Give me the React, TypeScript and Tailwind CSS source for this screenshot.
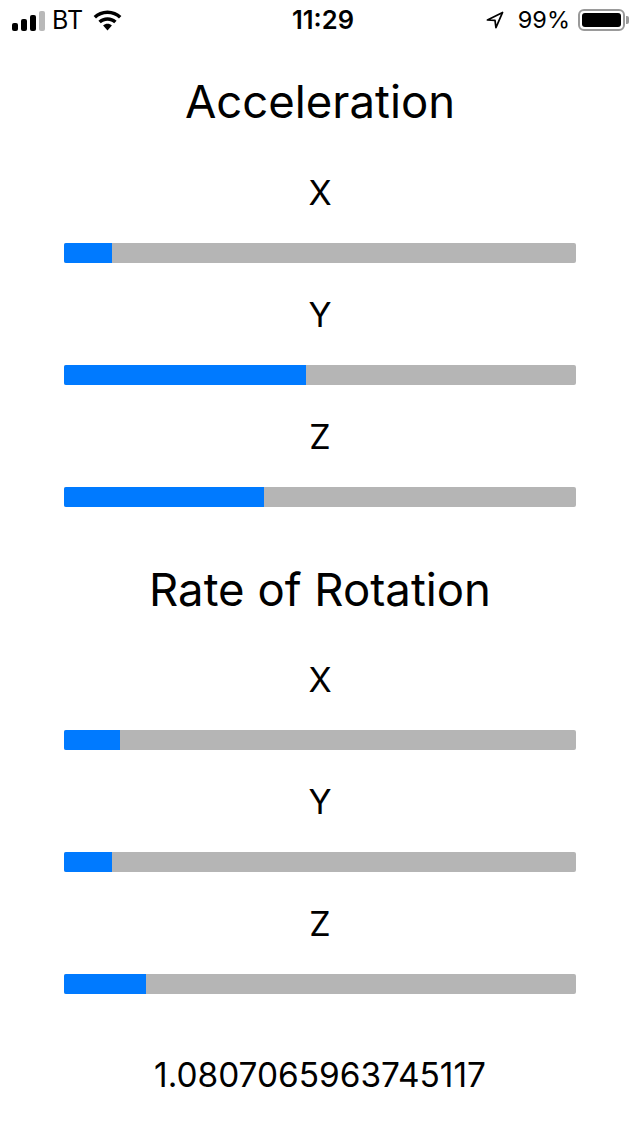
const font = "font-['Inter','Liberation_Sans',sans-serif]"

const acceleration = [
  { label: "X", value: 48 },
  { label: "Y", value: 242 },
  { label: "Z", value: 200 },
]

const rotation = [
  { label: "X", value: 56 },
  { label: "Y", value: 48 },
  { label: "Z", value: 82 },
]

function StatusBar() {
  return (
    <div className="flex h-10 items-center justify-between pl-3 pr-[11px] text-black">
      <div className="flex w-[200px] items-center">
        <div className="flex items-end gap-[3px] pt-[1px]">
          <div className="h-[8px] w-[6px] rounded-[2px] bg-black" />
          <div className="h-[12px] w-[6px] rounded-[2px] bg-black" />
          <div className="h-[16px] w-[6px] rounded-[2px] bg-black" />
          <div className="h-[20px] w-[6px] rounded-[2px] bg-[#b9b9b9]" />
        </div>
        <span className="ml-[7px] text-[25px] leading-none">BT</span>
        <svg className="ml-[10px]" width="29" height="21" viewBox="0 0 29 21">
          <path d="M14.5 0.5C9 0.5 4.1 2.6 0.6 5.9L3 8.5C6 5.7 10 4 14.5 4S23 5.7 26 8.5L28.4 5.9C24.9 2.6 20 0.5 14.5 0.5Z" fill="black" />
          <path d="M14.5 7.2C11 7.2 7.9 8.5 5.4 10.8L7.8 13.3C9.6 11.7 11.9 10.7 14.5 10.7S19.4 11.7 21.2 13.3L23.6 10.8C21.1 8.5 18 7.2 14.5 7.2Z" fill="black" />
          <path d="M14.5 13.8C12.8 13.8 11.3 14.4 10.1 15.5L14.5 20.4L18.9 15.5C17.7 14.4 16.2 13.8 14.5 13.8Z" fill="black" />
        </svg>
      </div>
      <span className="ml-[5px] text-[25.5px] leading-none font-semibold">11:29</span>
      <div className="flex w-[200px] items-center justify-end">
        <svg width="18" height="18" viewBox="0 0 19 19">
          <path d="M17.5 1.5L1.5 9.5L9.5 10L10.5 17.5Z" fill="none" stroke="black" strokeWidth="1.8" strokeLinejoin="round" />
        </svg>
        <span className="ml-[14px] text-[23.5px] leading-none">99%</span>
        <div className="ml-[8px] flex h-[22px] w-[47px] items-center rounded-[6px] border-2 border-[#9a9a9a] p-[2px]">
          <div className="h-full w-full rounded-[3px] bg-black" />
        </div>
        <div className="ml-[1px] h-[8px] w-[3px] rounded-r-[2px] bg-[#9a9a9a]" />
      </div>
    </div>
  )
}

function Meter({ label, value }: { label: string; value: number }) {
  return (
    <div className="flex h-[122px] flex-col items-center">
      <div className="h-[102px] pt-[31px] text-[34px] leading-[41px]">{label}</div>
      <div className="h-5 w-full overflow-hidden rounded-[2px] bg-[#b5b5b5]">
        <div className="h-full bg-[#007aff]" style={{ width: value }} />
      </div>
    </div>
  )
}

export default function App() {
  return (
    <div className={`${font} h-[1136px] w-[640px] overflow-hidden bg-white text-black`}>
      <StatusBar />
      <div className="px-16">
        <h1 className="pt-[33px] text-center text-[45.5px] leading-[58px] font-normal">Acceleration</h1>
        <div className="mt-[10px]">
          {acceleration.map((m) => (
            <Meter key={"a" + m.label} {...m} />
          ))}
        </div>
        <h1 className="mt-[54px] text-center text-[45.5px] leading-[58px] font-normal">Rate of Rotation</h1>
        <div className="mt-[9px]">
          {rotation.map((m) => (
            <Meter key={"r" + m.label} {...m} />
          ))}
        </div>
        <p className="mt-[61px] text-center text-[33.4px] leading-[41px]">1.0807065963745117</p>
      </div>
    </div>
  )
}
